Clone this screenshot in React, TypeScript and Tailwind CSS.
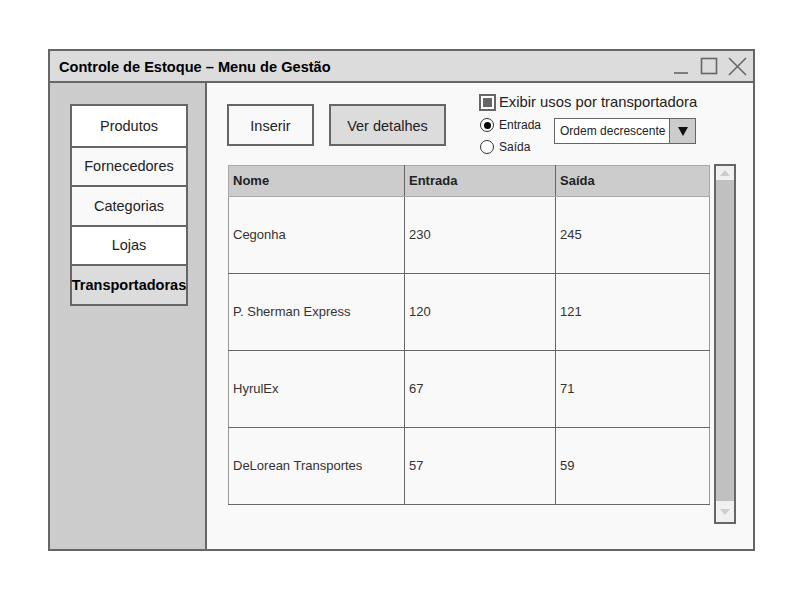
import React from 'react'

const NAV = ['Produtos', 'Fornecedores', 'Categorias', 'Lojas', 'Transportadoras']

const NAV_BG: Record<string, string> = {
  Produtos: 'bg-white',
  Fornecedores: 'bg-[#f9f9f9]',
  Categorias: 'bg-[#f9f9f9]',
  Lojas: 'bg-white',
  Transportadoras: 'bg-[#dcdcdc] font-bold text-black',
}

const ROWS = [
  { nome: 'Cegonha', entrada: '230', saida: '245' },
  { nome: 'P. Sherman Express', entrada: '120', saida: '121' },
  { nome: 'HyrulEx', entrada: '67', saida: '71' },
  { nome: 'DeLorean Transportes', entrada: '57', saida: '59' },
]

function WindowControls() {
  return (
    <div className="flex items-center pr-[6px]">
      <svg width="16" height="18" viewBox="0 0 16 18">
        <line x1="1" y1="16" x2="15" y2="16" stroke="#666" strokeWidth="1.6" />
      </svg>
      <svg className="ml-[11px]" width="18" height="18" viewBox="0 0 18 18">
        <rect x="1.5" y="1.5" width="15" height="15" fill="none" stroke="#666" strokeWidth="1.6" />
      </svg>
      <svg className="ml-[10px]" width="19" height="19" viewBox="0 0 19 19">
        <path d="M1 1 L18 18 M18 1 L1 18" stroke="#666" strokeWidth="1.6" />
      </svg>
    </div>
  )
}

export default function App() {
  return (
    <div className="w-[805px] h-[601px] bg-white pt-[49px] pl-[48px] font-['Liberation_Sans',Arial,sans-serif] text-[#222]">
      <div className="w-[707px] h-[502px] border-2 border-[#666] flex flex-col bg-[#f9f9f9]">
        {/* title bar */}
        <div className="h-[32px] shrink-0 bg-[#dcdcdc] border-b-2 border-[#666] flex items-center justify-between pl-[9px]">
          <span className="pt-[4px] text-[14.6px] font-bold text-black">Controle de Estoque – Menu de Gestão</span>
          <WindowControls />
        </div>

        <div className="flex flex-1 min-h-0">
          {/* sidebar */}
          <aside className="w-[157px] shrink-0 bg-[#cccccc] border-r-2 border-[#666] pl-[20px] pt-[21px]">
            <div className="w-[118px] border-2 border-[#666] flex flex-col">
              {NAV.map((item, i) => (
                <div
                  key={item}
                  className={`h-[39.5px] pt-[2px] flex items-center justify-center text-[14.5px] ${
                    i > 0 ? 'border-t-2 border-[#666]' : ''
                  } ${NAV_BG[item]}`}
                >
                  {item}
                </div>
              ))}
            </div>
          </aside>

          {/* content */}
          <main className="flex-1 pl-[20px] flex flex-col">
            <div className="h-[82px] flex items-start">
              <button className="mt-[21px] pt-[3px] w-[87px] h-[42px] border-2 border-[#666] bg-[#f9f9f9] text-[14.5px]">
                Inserir
              </button>
              <button className="mt-[21px] pt-[3px] ml-[15px] w-[117px] h-[42px] border-2 border-[#666] bg-[#dcdcdc] text-[14.5px]">
                Ver detalhes
              </button>
              <div className="ml-[33px] mt-[10px] flex flex-col">
                <label className="flex items-center gap-[3px] h-[18px]">
                  <span className="w-[17px] h-[17px] border-2 border-[#666] bg-white p-[2px] flex">
                    <span className="flex-1 bg-[#666]" />
                  </span>
                  <span className="text-[14.8px] text-[#222]">Exibir usos por transportadora</span>
                </label>
                <div className="flex mt-[7px]">
                  <div className="flex flex-col gap-[8px] pl-[1px]">
                    <label className="flex items-center gap-[5px] h-[14px]">
                      <span className="w-[14px] h-[14px] rounded-full border border-[#333] bg-white flex items-center justify-center">
                        <span className="w-[7px] h-[7px] rounded-full bg-black" />
                      </span>
                      <span className="text-[12px]">Entrada</span>
                    </label>
                    <label className="flex items-center gap-[5px] h-[14px]">
                      <span className="w-[14px] h-[14px] rounded-full border border-[#333] bg-white" />
                      <span className="text-[12px]">Saída</span>
                    </label>
                  </div>
                  <div className="ml-[13px] w-[142px] h-[26px] border border-[#666] bg-white flex">
                    <span className="flex-1 text-[12px] flex items-center pl-[5px]">Ordem decrescente</span>
                    <span className="w-[26px] bg-[#cccccc] border-l border-[#666] flex items-center justify-center">
                      <svg width="10" height="9" viewBox="0 0 10 9">
                        <path d="M0 0 L10 0 L5 9 Z" fill="#111" />
                      </svg>
                    </span>
                  </div>
                </div>
              </div>
            </div>

            <div className="flex items-start">
              <table className="ml-[1px] w-[482px] border-collapse text-[13px] text-[#333]">
                <thead>
                  <tr className="h-[31px] bg-[#cccccc] text-left">
                    <th className="w-[176px] pl-[4px] font-bold text-[#222] border border-[#aaa] border-r-[#666]">Nome</th>
                    <th className="w-[151px] pl-[4px] font-bold text-[#222] border border-[#aaa] border-r-[#666]">Entrada</th>
                    <th className="pl-[4px] font-bold text-[#222] border border-[#aaa]">Saída</th>
                  </tr>
                </thead>
                <tbody>
                  {ROWS.map((r) => (
                    <tr key={r.nome} className="h-[77px]">
                      <td className="pl-[4px] border border-[#999] border-r-[#666] border-b-[#666]">{r.nome}</td>
                      <td className="pl-[4px] border border-[#999] border-r-[#666] border-b-[#666]">{r.entrada}</td>
                      <td className="pl-[4px] border border-[#999] border-b-[#666]">{r.saida}</td>
                    </tr>
                  ))}
                </tbody>
              </table>

              <div className="ml-[4px] -mt-[1px] w-[22px] h-[360px] border-2 border-[#666] bg-[#c0c0c0] flex flex-col justify-between">
                <div className="h-[14px] bg-[#f0f0f0] flex items-center justify-center">
                  <svg width="10" height="6" viewBox="0 0 10 6">
                    <path d="M0 6 L5 0 L10 6 Z" fill="#ccc" />
                  </svg>
                </div>
                <div className="h-[21px] bg-[#f0f0f0] flex items-center justify-center">
                  <svg width="10" height="6" viewBox="0 0 10 6">
                    <path d="M0 0 L5 6 L10 0 Z" fill="#ccc" />
                  </svg>
                </div>
              </div>
            </div>
          </main>
        </div>
      </div>
    </div>
  )
}
